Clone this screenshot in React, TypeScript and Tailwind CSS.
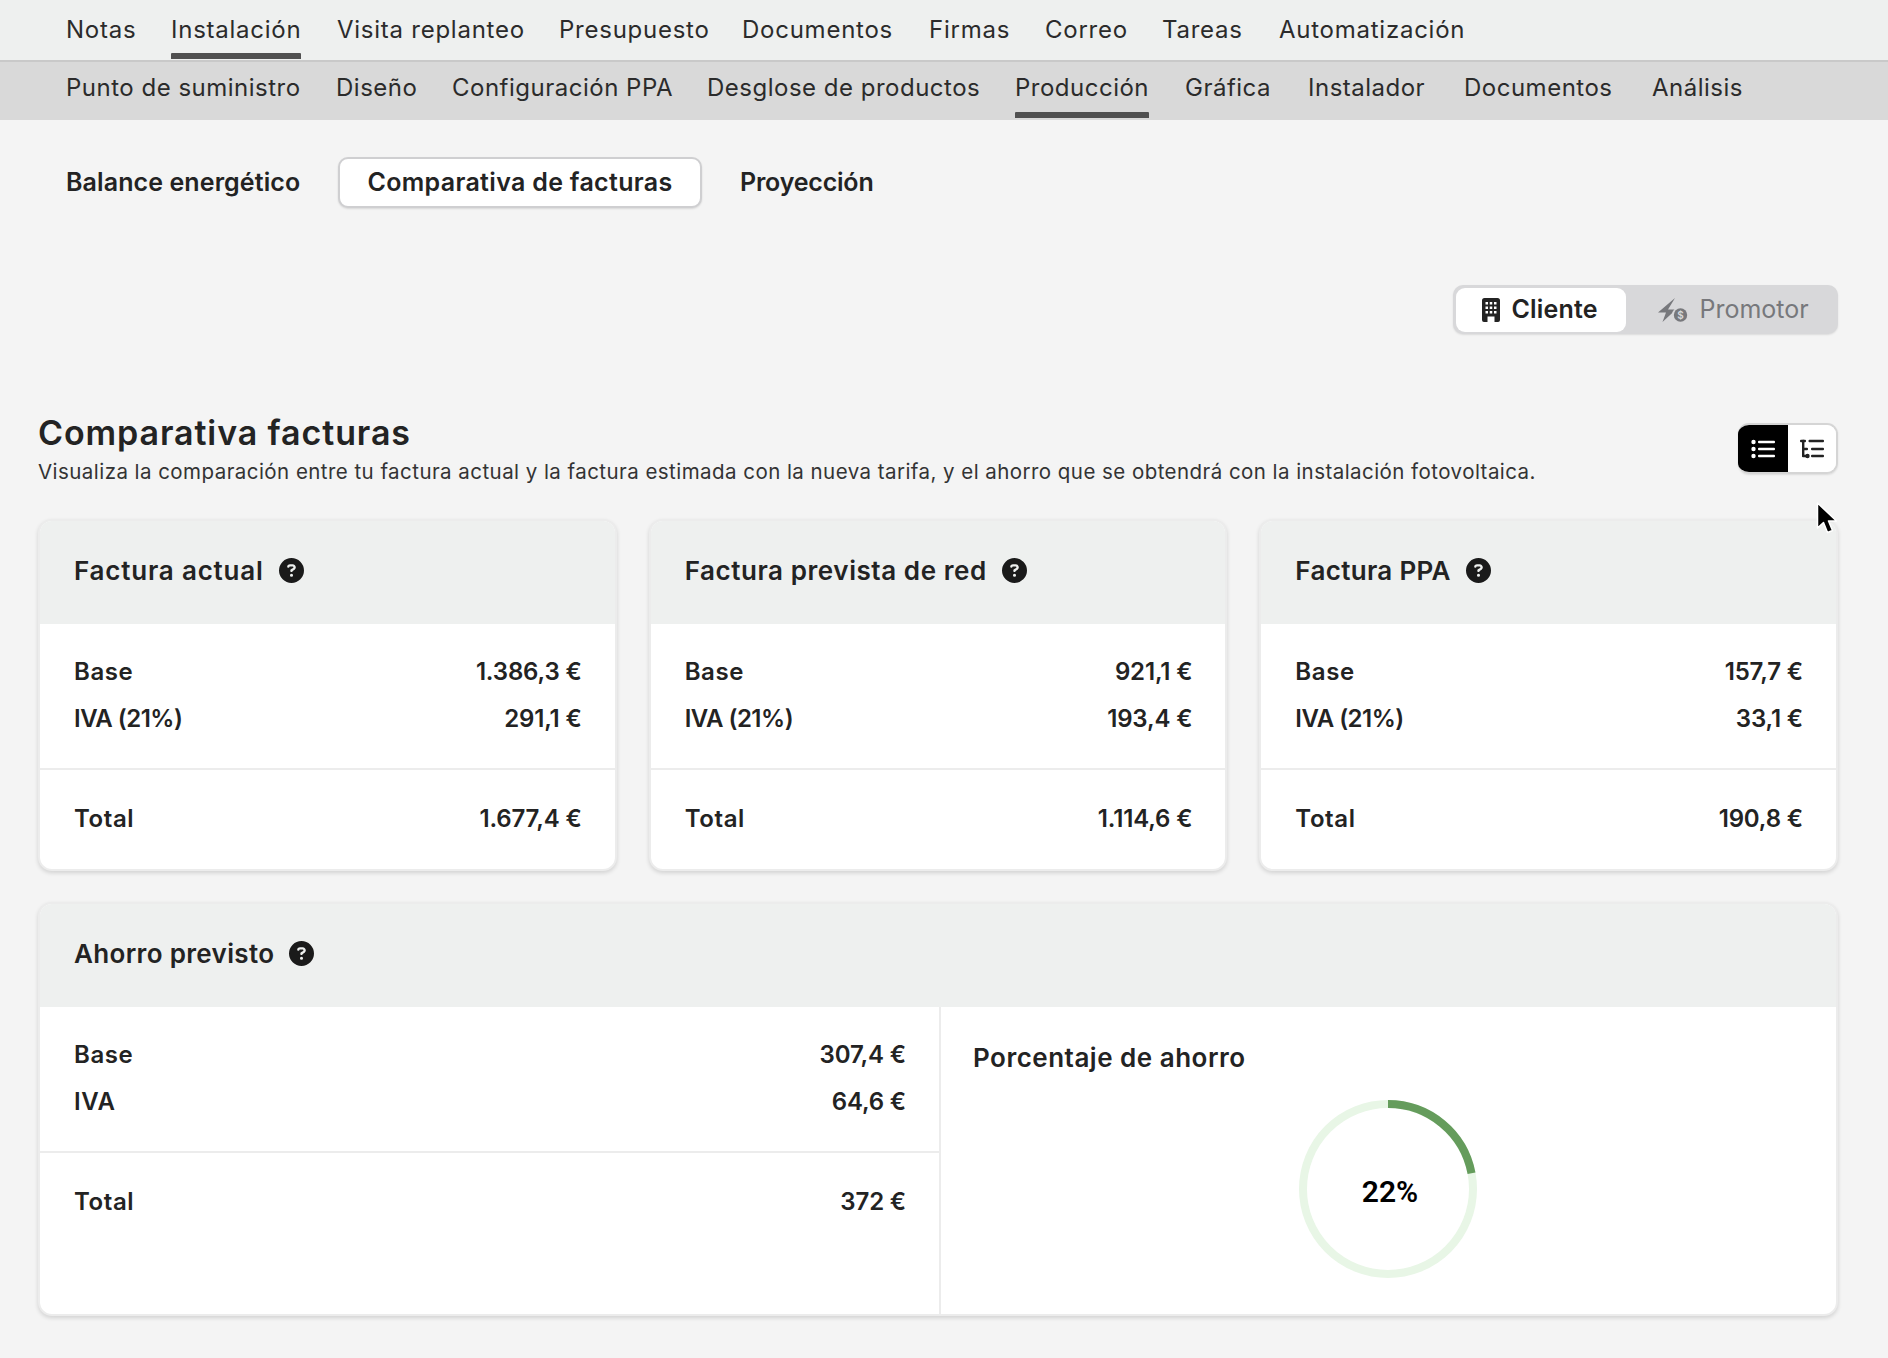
import React from "react";
import { FaCircleQuestion } from "react-icons/fa6";

const font = "[font-family:Inter,'Liberation_Sans',sans-serif]";

const topTabs = [
  { label: "Notas", w: "w-[69px]" },
  { label: "Instalación", w: "w-[130px]", active: true },
  { label: "Visita replanteo", w: "w-[186px]" },
  { label: "Presupuesto", w: "w-[147px]" },
  { label: "Documentos", w: "w-[151px]" },
  { label: "Firmas", w: "w-[80px]" },
  { label: "Correo", w: "w-[81px]" },
  { label: "Tareas", w: "w-[81px]" },
  { label: "Automatización", w: "w-[186px]" },
];

const subTabs = [
  { label: "Punto de suministro", w: "w-[234px]" },
  { label: "Diseño", w: "w-[80px]" },
  { label: "Configuración PPA", w: "w-[219px]" },
  { label: "Desglose de productos", w: "w-[272px]" },
  { label: "Producción", w: "w-[134px]", active: true },
  { label: "Gráfica", w: "w-[87px]" },
  { label: "Instalador", w: "w-[120px]" },
  { label: "Documentos", w: "w-[152px]" },
  { label: "Análisis", w: "w-[89px]" },
];

function Tab({ label, w, active, sub }: { label: string; w: string; active?: boolean; sub?: boolean }) {
  return (
    <div className={`${w} h-full flex items-center justify-start whitespace-nowrap relative text-[#2b2b2b] text-[24px] font-normal ${sub ? "tracking-[0.5px]" : "tracking-[0.75px]"}`}>
      <span className={sub ? "pb-[5px]" : "pt-[1px]"}>{label}</span>
      {active && <span className="absolute left-0 right-0 bottom-0 h-[6px] bg-[#505050] rounded-t-[1px]" />}
    </div>
  );
}

function Help({ className }: { className?: string }) {
  return <FaCircleQuestion className={`text-[#1a1a1a] w-[25px] h-[25px] shrink-0 ${className ?? ""}`} />;
}

function Row({ label, value }: { label: string; value: string }) {
  const labelTracking = label.includes("(") ? "tracking-[-0.5px]" : "tracking-[0.6px]";
  return (
    <div className="flex justify-between items-center h-[47px] text-[24px] font-semibold text-[#232323] tracking-[-0.15px]">
      <span className={labelTracking}>{label}</span>
      <span>{value}</span>
    </div>
  );
}

function CardHeader({ title, tracking }: { title: string; tracking: string }) {
  return (
    <div className="h-[103px] bg-[#eef0ef] pl-[34px] pr-[33px] pb-[4px] flex items-center gap-[15px]">
      <span className={`text-[26px] font-semibold text-[#232323] ${tracking}`}>{title}</span>
      <Help />
    </div>
  );
}

function Rows({ rows, total }: { rows: [string, string][]; total: string }) {
  return (
    <>
      <div className="pl-[34px] pr-[33px] pt-[24px] pb-[26px] border-b-2 border-[#ececec]">
        {rows.map(([l, v]) => (
          <Row key={l} label={l} value={v} />
        ))}
      </div>
      <div className="pl-[34px] pr-[33px] pt-[25px] pb-[27px]">
        <Row label="Total" value={total} />
      </div>
    </>
  );
}

function BillCard({ title, tracking, base, iva, total }: { title: string; tracking: string; base: string; iva: string; total: string }) {
  return (
    <div className="bg-white rounded-[14px] overflow-hidden border-2 border-[#ececec] shadow-[0_2px_4px_rgba(0,0,0,0.14)]">
      <CardHeader title={title} tracking={tracking} />
      <Rows rows={[["Base", base], ["IVA (21%)", iva]]} total={total} />
    </div>
  );
}

function Donut() {
  const r = 85;
  const c = 2 * Math.PI * r;
  return (
    <div className="relative w-[180px] h-[180px]">
      <svg viewBox="0 0 180 180" className="w-[180px] h-[180px]">
        <circle cx="90" cy="90" r={r} fill="none" stroke="#e8f6e6" strokeWidth="8" />
        <circle
          cx="90"
          cy="90"
          r={r}
          fill="none"
          stroke="#659c5c"
          strokeWidth="8"
          strokeDasharray={`${c * 0.22} ${c}`}
          transform="rotate(-90 90 90)"
        />
      </svg>
      <span className="absolute inset-0 flex items-center justify-center pl-[4px] pt-[5px] [font-family:Roboto,sans-serif] text-[30px] font-semibold text-black">
        22%
      </span>
    </div>
  );
}

function BuildingIcon() {
  return (
    <svg viewBox="0 0 18 24" className="w-[18px] h-[24px] shrink-0">
      <path
        fillRule="evenodd"
        fill="#232323"
        d="M2.5 0h13A2.5 2.5 0 0 1 18 2.5V22a2 2 0 0 1-2 2h-3.5v-5.5h-7V24H2a2 2 0 0 1-2-2V2.5A2.5 2.5 0 0 1 2.5 0ZM3.5 4v2.5h2.5V4Zm4.25 0v2.5h2.5V4ZM12 4v2.5h2.5V4ZM3.5 8.5V11h2.5V8.5Zm4.25 0V11h2.5V8.5Zm4.25 0V11h2.5V8.5ZM3.5 13v2.5h2.5V13Zm4.25 0v2.5h2.5V13Zm4.25 0v2.5h2.5V13Z"
      />
    </svg>
  );
}

function BoltDollarIcon() {
  return (
    <svg viewBox="0 0 30 24" className="w-[30px] h-[24px] shrink-0">
      <path fill="#77787c" d="M17 0 0 14.5h8L4.5 24 18 11.5h-8Z" />
      <circle cx="22.5" cy="17" r="8.5" fill="#d8d8da" />
      <circle cx="22.5" cy="17" r="6.7" fill="#77787c" />
      <text x="22.5" y="20.5" textAnchor="middle" fontSize="10" fontWeight="600" fill="#d8d8da" fontFamily="Inter, sans-serif">$</text>
    </svg>
  );
}

function ListIcon() {
  return (
    <svg viewBox="0 0 24 20" className="w-[24px] h-[20px]">
      <g fill="#fff">
        <circle cx="2.5" cy="3" r="2.2" />
        <circle cx="2.5" cy="10" r="2.2" />
        <circle cx="2.5" cy="17" r="2.2" />
        <rect x="7" y="1.8" width="17" height="2.4" rx="1" />
        <rect x="7" y="8.8" width="17" height="2.4" rx="1" />
        <rect x="7" y="15.8" width="17" height="2.4" rx="1" />
      </g>
    </svg>
  );
}

function TreeListIcon() {
  return (
    <svg viewBox="0 0 24 20" className="w-[24px] h-[20px]">
      <g fill="#222">
        <rect x="0" y="0.8" width="6" height="2.4" rx="1" />
        <rect x="2" y="0.8" width="2.4" height="17" rx="1" />
        <rect x="2" y="8.8" width="6" height="2.4" rx="1" />
        <rect x="2" y="15.8" width="6" height="2.4" rx="1" />
        <circle cx="7.5" cy="17" r="2.2" />
        <rect x="8.5" y="0.8" width="15.5" height="2.4" rx="1" />
        <rect x="11" y="8.8" width="13" height="2.4" rx="1" />
        <rect x="11" y="15.8" width="13" height="2.4" rx="1" />
      </g>
    </svg>
  );
}

function Cursor() {
  return (
    <svg viewBox="0 0 22 34" className="absolute left-[1816px] top-[502px] w-[22px] h-[34px]">
      <path d="M1.5 1v25l6-5.5 4 10 5-2-4-9.5h8Z" fill="#000" stroke="#fff" strokeWidth="1.5" strokeLinejoin="round" />
    </svg>
  );
}

export default function App() {
  return (
    <div className={`${font} relative w-[1888px] h-[1358px] bg-[#f4f4f4] overflow-hidden`}>
      <nav className="h-[62px] bg-[#eef0ef] border-b-2 border-[#c9c9c9] pl-[66px] flex gap-[36px] pb-[1px]">
        {topTabs.map((t) => (
          <Tab key={t.label} {...t} />
        ))}
      </nav>
      <nav className="h-[58px] bg-[#d9d9d9] pl-[66px] flex gap-[36px] pb-[2px]">
        {subTabs.map((t) => (
          <Tab key={t.label} {...t} sub />
        ))}
      </nav>

      <div className="pl-[66px] pt-[37px] flex items-center gap-[38px] h-[88px] text-[25px] font-semibold text-[#232323]">
        <span className="w-[234px] whitespace-nowrap tracking-[0.1px]">Balance energético</span>
        <span className="w-[364px] h-[51px] flex items-center justify-center bg-white border-2 border-[#cfcfd1] rounded-[10px] shadow-[0_1px_2px_rgba(0,0,0,0.12)] whitespace-nowrap tracking-[0.32px]">
          Comparativa de facturas
        </span>
        <span className="whitespace-nowrap tracking-[-0.2px]">Proyección</span>
      </div>

      <div className="pl-[38px] pr-[50px] w-[1888px]">
        <div className="flex justify-end mt-[77px]">
          <div className="w-[385px] h-[49px] bg-[#d8d8da] rounded-[10px] p-[2.5px] flex items-center shadow-[0_1px_2px_rgba(0,0,0,0.1)]">
            <div className="w-[170px] h-full bg-white rounded-[9px] flex items-center gap-[12px] pl-[26px] text-[25px] font-semibold text-[#232323] tracking-[0.2px]">
              <BuildingIcon />
              <span>Cliente</span>
            </div>
            <div className="flex-1 flex items-center gap-[12px] pl-[32px] text-[25px] text-[#77787c]">
              <BoltDollarIcon />
              <span>Promotor</span>
            </div>
          </div>
        </div>

        <div className="flex justify-between items-start mt-[89px]">
          <div>
            <h1 className="text-[34px] leading-[40px] mt-[-10px] font-semibold text-[#232323] tracking-[0.9px]">Comparativa facturas</h1>
            <p className="text-[20.5px] leading-[30px] mt-[4px] text-[#333] tracking-[0.45px] whitespace-nowrap">
              Visualiza la comparación entre tu factura actual y la factura estimada con la nueva tarifa, y el ahorro que se obtendrá con la instalación fotovoltaica.
            </p>
          </div>
          <div className="w-[100px] h-[51px] rounded-[11px] overflow-hidden border-2 border-[#d5d5d5] border-l-0 flex shadow-[0_1px_2px_rgba(0,0,0,0.1)]">
            <div className="w-[50px] h-full bg-black flex items-center justify-center">
              <ListIcon />
            </div>
            <div className="flex-1 h-full bg-white flex items-center justify-center">
              <TreeListIcon />
            </div>
          </div>
        </div>

        <div className="grid grid-cols-3 gap-[32px] mt-[32px]">
          <BillCard title="Factura actual" tracking="tracking-[0.8px]" base="1.386,3 €" iva="291,1 €" total="1.677,4 €" />
          <BillCard title="Factura prevista de red" tracking="tracking-[0.57px]" base="921,1 €" iva="193,4 €" total="1.114,6 €" />
          <BillCard title="Factura PPA" tracking="tracking-[0.33px]" base="157,7 €" iva="33,1 €" total="190,8 €" />
        </div>

        <div className="mt-[31px] bg-white rounded-[14px] overflow-hidden border-2 border-[#ececec] shadow-[0_2px_4px_rgba(0,0,0,0.14)]">
          <CardHeader title="Ahorro previsto" tracking="tracking-[0.33px]" />
          <div className="flex h-[307px]">
            <div className="w-[901px] border-r-2 border-[#ececec]">
              <Rows rows={[["Base", "307,4 €"], ["IVA", "64,6 €"]]} total="372 €" />
            </div>
            <div className="flex-1 pl-[32px] pt-[31px]">
              <div className="text-[26px] font-semibold text-[#232323] tracking-[0.5px]">Porcentaje de ahorro</div>
              <div className="ml-[325px] mt-[22px]">
                <Donut />
              </div>
            </div>
          </div>
        </div>
      </div>
      <Cursor />
    </div>
  );
}
